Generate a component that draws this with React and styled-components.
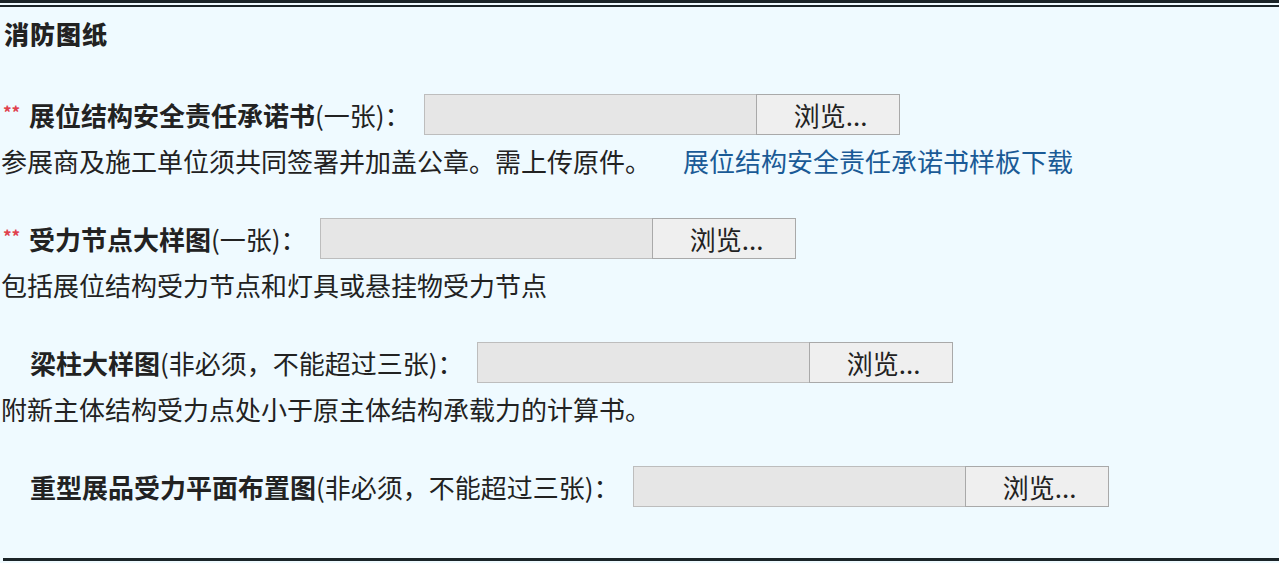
import React from 'react';
import styled, { createGlobalStyle } from 'styled-components';

const colors = {
    panel: '#effaff',
    rule: '#1b2428',
    text: '#222222',
    star: '#e0404c',
    link: '#1a5a96',
    fieldBg: '#e6e6e6',
    fieldBorder: '#bdbdbd',
    buttonBg: '#efefef',
    buttonBorder: '#a9a9a9',
};

const GlobalStyle = createGlobalStyle`
    html, body {
        margin: 0;
        padding: 0;
        background: ${colors.panel};
    }
    body {
        font-family: 'Noto Sans CJK SC', 'Noto Sans', sans-serif;
        color: ${colors.text};
        overflow: hidden;
    }
`;

const Panel = styled.div`
    width: 1279px;
    height: 563px;
    background: ${colors.panel};
    display: flex;
    flex-direction: column;
`;

// double rule at the very top
const TopRule = styled.div`
    height: 2px;
    border-top: 3px solid ${colors.rule};
    border-bottom: 2px solid ${colors.rule};
`;

const Body = styled.div`
    padding: 11px 0 51px 0;
    border-bottom: 3px solid ${colors.rule};
    margin-left: 3px;
    display: flex;
    flex-direction: column;
`;

const Title = styled.div`
    font-size: 25px;
    font-weight: 900;
    line-height: 30px;
    padding-left: 1px;
    letter-spacing: 1px;
`;

const Sections = styled.div`
    margin-top: 46px;
    display: flex;
    flex-direction: column;
    gap: 42px;
`;

const Section = styled.div`
    display: flex;
    flex-direction: column;
`;

const Row = styled.div`
    display: flex;
    align-items: center;
    height: 41px;
    font-size: 26px;
    line-height: 41px;
    white-space: nowrap;
`;

const Star = styled.span`
    display: inline-block;
    width: ${(p) => (p.$hidden ? '27px' : '26px')};
    align-self: flex-start;
    margin-top: 8px;
    font-size: 17px;
    line-height: 20px;
    font-weight: 700;
    color: ${(p) => (p.$hidden ? 'transparent' : colors.star)};
`;

const Label = styled.span`
    font-weight: 700;
`;

const Note = styled.span`
    font-weight: 400;
`;

const Field = styled.input`
    box-sizing: border-box;
    width: 332px;
    height: 41px;
    margin: 0 0 0 13px;
    padding: 0 6px;
    background: ${colors.fieldBg};
    border: 1px solid ${colors.fieldBorder};
    border-right: none;
    outline: none;
    font-size: 24px;
`;

const Browse = styled.button`
    box-sizing: border-box;
    width: 144px;
    height: 41px;
    margin: 0;
    padding: 0 0 0 6px;
    background: ${colors.buttonBg};
    border: 1px solid ${colors.buttonBorder};
    font-family: 'Noto Sans CJK SC', sans-serif;
    font-size: 26px;
    line-height: 39px;
    color: ${colors.text};
`;

const Desc = styled.div`
    margin-top: 11px;
    margin-left: -2px;
    font-size: 26px;
    line-height: 30px;
    white-space: nowrap;
`;

const Link = styled.a`
    margin-left: 32px;
    color: ${colors.link};
    text-decoration: none;
`;

const uploads = [
    {
        required: true,
        label: '展位结构安全责任承诺书',
        note: '(一张)：',
        desc: '参展商及施工单位须共同签署并加盖公章。需上传原件。',
        link: '展位结构安全责任承诺书样板下载',
    },
    {
        required: true,
        label: '受力节点大样图',
        note: '(一张)：',
        desc: '包括展位结构受力节点和灯具或悬挂物受力节点',
    },
    {
        required: false,
        label: '梁柱大样图',
        note: '(非必须，不能超过三张)：',
        desc: '附新主体结构受力点处小于原主体结构承载力的计算书。',
    },
    {
        required: false,
        label: '重型展品受力平面布置图',
        note: '(非必须，不能超过三张)：',
    },
];

export default function App() {
    return (
        <>
            <GlobalStyle />
            <Panel>
                <TopRule />
                <Body>
                    <Title>消防图纸</Title>
                    <Sections>
                        {uploads.map((item) => (
                            <Section key={item.label}>
                                <Row>
                                    <Star $hidden={!item.required}>**</Star>
                                    <Label>{item.label}</Label>
                                    <Note>{item.note}</Note>
                                    <Field type="text" readOnly />
                                    <Browse type="button">浏览...</Browse>
                                </Row>
                                {item.desc && (
                                    <Desc>
                                        {item.desc}
                                        {item.link && <Link href="#">{item.link}</Link>}
                                    </Desc>
                                )}
                            </Section>
                        ))}
                    </Sections>
                </Body>
            </Panel>
        </>
    );
}
